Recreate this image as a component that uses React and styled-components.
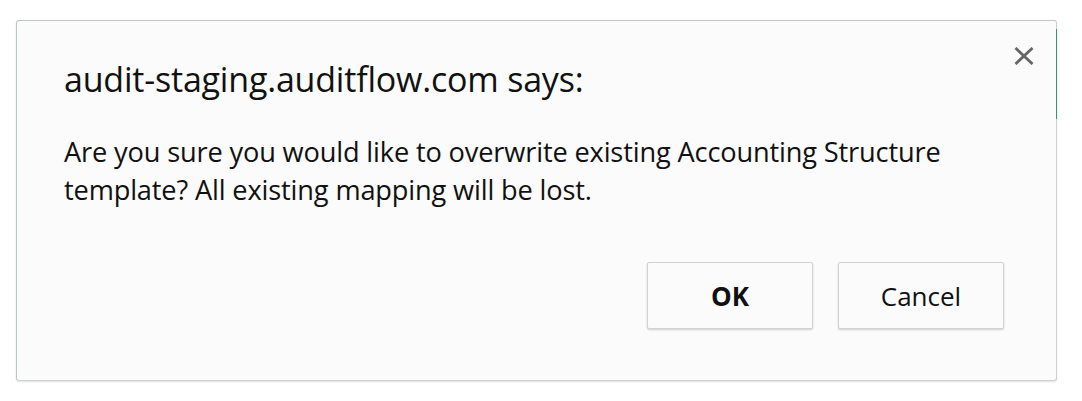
import React from "react";
import styled, { createGlobalStyle } from "styled-components";

const GlobalStyle = createGlobalStyle`
  html, body {
    margin: 0;
    padding: 0;
    background: #ffffff;
  }
  body {
    font-family: "Open Sans", "Noto Sans", sans-serif;
  }
`;

const Page = styled.div`
  width: 1082px;
  height: 401px;
  padding: 20px 0 0 16px;
  box-sizing: border-box;
`;

const Dialog = styled.div`
  position: relative;
  width: 1041px;
  height: 361px;
  box-sizing: border-box;
  background: #fbfbfb;
  border: 1px solid #cfcfcf;
  border-top-color: #c4c4c4;
  border-left-color: #b9c9c0;
  border-radius: 3px;
  box-shadow: 0 1px 2px rgba(0, 0, 0, 0.12);
  padding: 38px 48px 0 47px;
  display: flex;
  flex-direction: column;
  color: #111;

  /* green edge of the page behind the dialog */
  &::after {
    content: "";
    position: absolute;
    right: -1px;
    top: 8px;
    width: 1px;
    height: 90px;
    background: #2f9a62;
  }
`;

const CloseButton = styled.button`
  position: absolute;
  top: 23px;
  right: 20px;
  width: 24px;
  height: 24px;
  padding: 0;
  border: none;
  background: transparent;
  cursor: pointer;
  display: flex;
  align-items: center;
  justify-content: center;
`;

const Title = styled.h1`
  margin: 0;
  font-size: 34px;
  font-weight: 400;
  line-height: 40px;
  letter-spacing: -0.2px;
`;

const Message = styled.p`
  margin: 34px 0 0;
  font-size: 27.2px;
  line-height: 37.5px;
  letter-spacing: -0.15px;
  max-width: 920px;
`;

const Actions = styled.div`
  display: flex;
  justify-content: flex-end;
  gap: 25px;
  margin-top: 54px;
  padding-right: 4px;
`;

const Button = styled.button`
  width: 166px;
  height: 67px;
  box-sizing: border-box;
  background: #fbfbfb;
  border: 1px solid #d2d2d2;
  border-radius: 2px;
  box-shadow: 0 1px 2px rgba(0, 0, 0, 0.18);
  font-family: inherit;
  font-size: 26px;
  font-weight: ${(p) => (p.$primary ? 700 : 400)};
  color: #111;
  cursor: pointer;
`;

const App = () => {
  return (
    <Page>
      <GlobalStyle />
      <Dialog>
        <CloseButton aria-label="Close">
          <svg width="20" height="18" viewBox="0 0 20 18">
            <path
              d="M1.5 1 L18.5 17 M18.5 1 L1.5 17"
              stroke="#666"
              strokeWidth="2.8"
              strokeLinecap="butt"
            />
          </svg>
        </CloseButton>
        <Title>audit-staging.auditflow.com says:</Title>
        <Message>
          Are you sure you would like to overwrite existing Accounting Structure
          template? All existing mapping will be lost.
        </Message>
        <Actions>
          <Button $primary>OK</Button>
          <Button>Cancel</Button>
        </Actions>
      </Dialog>
    </Page>
  );
};

export default App;
